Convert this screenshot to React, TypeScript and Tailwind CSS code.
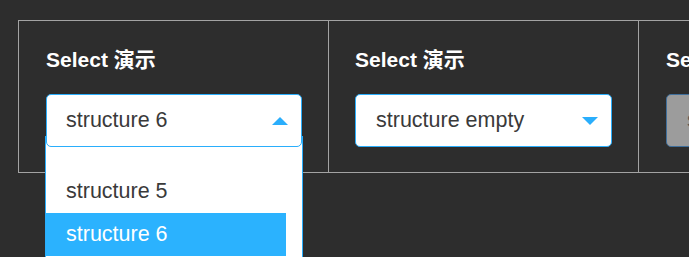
import React from "react";

const font = { fontFamily: '"Liberation Sans", Arial, "Noto Sans CJK SC", sans-serif' };

function Up() {
  return (
    <svg width="16" height="8" viewBox="0 0 16 8" className="block">
      <polygon points="0,8 8,0 16,8" fill="#2aaefc" />
    </svg>
  );
}
function Down() {
  return (
    <svg width="16" height="8" viewBox="0 0 16 8" className="block">
      <polygon points="0,0 16,0 8,8" fill="#2aaefc" />
    </svg>
  );
}

export default function App() {
  return (
    <div
      className="w-[689px] h-[257px] overflow-hidden bg-[#2d2d2d] pl-[18px] pt-[20px]"
      style={font}
    >
      <div className="flex w-[931px] border border-[#a3a3a3]">
        {/* Cell 1 */}
        <div className="w-[309px] shrink-0 pl-[27px] pt-[26px] pb-[25px]">
          <div className="text-[21px] leading-[26px] font-bold text-white mb-[21px]">Select 演示</div>
          <div className="relative w-[256px]">
            <div className="relative z-10 flex items-center justify-between h-[53px] rounded-[5px] bg-white border border-[#2aaefc] pl-[19px] pr-[13px]">
              <span className="text-[21.5px] text-[#3a3a3a]">structure 6</span>
              <Up />
            </div>
            <div className="absolute left-[-1px] top-[42px] w-[258px] h-[200px] bg-white border-x border-[#2aaefc] pt-[34px] pr-[16px]">
              <div className="h-[43px] flex items-center pl-[20px] text-[21.5px] text-[#3a3a3a]">structure 5</div>
              <div className="h-[43px] flex items-center pl-[20px] text-[21.5px] text-white bg-[#2bb2fe]">structure 6</div>
            </div>
          </div>
        </div>
        {/* Cell 2 */}
        <div className="w-[310px] shrink-0 border-l border-[#a3a3a3] pl-[26px] pt-[26px] pb-[25px]">
          <div className="text-[21px] leading-[26px] font-bold text-white mb-[21px]">Select 演示</div>
          <div className="flex items-center justify-between w-[257px] h-[53px] rounded-[5px] bg-white border border-[#2aaefc] pl-[20px] pr-[13px]">
            <span className="text-[21.5px] text-[#3a3a3a]">structure empty</span>
            <Down />
          </div>
        </div>
        {/* Cell 3 */}
        <div className="w-[310px] shrink-0 border-l border-[#a3a3a3] pl-[27px] pt-[26px] pb-[25px]">
          <div className="text-[21px] leading-[26px] font-bold text-white mb-[21px] whitespace-nowrap">Select 演示</div>
          <div className="flex items-center justify-between w-[257px] h-[53px] rounded-[5px] bg-[#9c9c9c] border border-[#3f6f9c] pl-[20px] pr-[13px]">
            <span className="text-[21.5px] text-[#555]">structure 1</span>
            <Down />
          </div>
        </div>
      </div>
    </div>
  );
}
